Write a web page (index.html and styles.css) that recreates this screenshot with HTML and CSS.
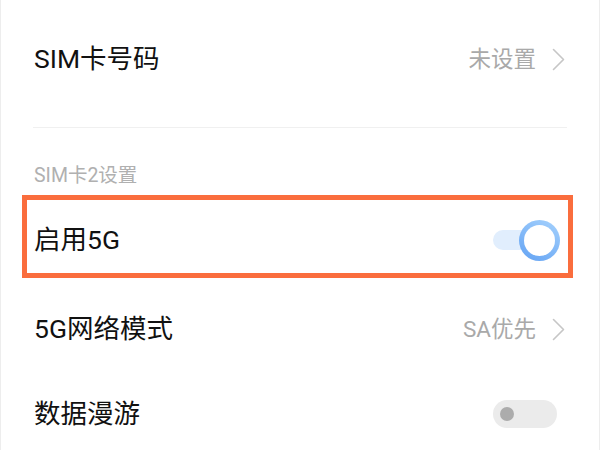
FILE: index.html
```html
<!DOCTYPE html>
<html lang="zh-CN">
<head>
<meta charset="utf-8">
<title>SIM卡设置</title>
<link rel="stylesheet" href="styles.css">
</head>
<body>
<div class="page">
  <div class="row row-first">
    <span class="label">SIM卡号码</span>
    <span class="value-group">
      <span class="value">未设置</span>
      <svg class="chevron" width="13" height="23" viewBox="0 0 13 23"><path d="M1.5 1.5 L11.5 11.5 L1.5 21.5" fill="none" stroke="#c6c6c6" stroke-width="1.6" stroke-linecap="round" stroke-linejoin="round"/></svg>
    </span>
  </div>
  <div class="divider"></div>
  <div class="section-title">SIM卡2设置</div>
  <div class="row row-highlight">
    <span class="label">启用5G</span>
    <span class="switch-on">
      <span class="switch-on-track"></span>
      <span class="switch-on-knob"></span>
    </span>
  </div>
  <div class="row row-mode">
    <span class="label">5G网络模式</span>
    <span class="value-group">
      <span class="value">SA优先</span>
      <svg class="chevron" width="13" height="23" viewBox="0 0 13 23"><path d="M1.5 1.5 L11.5 11.5 L1.5 21.5" fill="none" stroke="#c6c6c6" stroke-width="1.6" stroke-linecap="round" stroke-linejoin="round"/></svg>
    </span>
  </div>
  <div class="row row-last">
    <span class="label">数据漫游</span>
    <span class="switch-off"><span class="switch-off-knob"></span></span>
  </div>
</div>
</body>
</html>
```
FILE: styles.css
```css
html, body {
  margin: 0;
  padding: 0;
  background: #ffffff;
  overflow: hidden;
}

.page {
  width: 600px;
  height: 450px;
  box-sizing: border-box;
  border-left: 1px solid #ededed;
  border-right: 1px solid #ededed;
  font-family: "Roboto", "Noto Sans CJK SC", sans-serif;
  color: #111111;
}

.row {
  display: flex;
  align-items: center;
  justify-content: space-between;
  padding: 0 34px 0 33px;
  box-sizing: border-box;
}

.row-first { height: 118px; }
.row-highlight { height: 88px; position: relative; }
.row-mode { height: 90px; }
.row-last { height: 80px; }

.row-highlight::after {
  content: "";
  position: absolute;
  top: -1px;
  left: 21px;
  width: 551px;
  height: 83px;
  border: 5px solid #fa6d3d;
  box-sizing: border-box;
  pointer-events: none;
}

.label {
  font-size: 26.5px;
  line-height: 32px;
}

.value-group {
  display: flex;
  align-items: center;
  gap: 16px;
}

.value {
  font-size: 22.5px;
  line-height: 30px;
  color: #a9a9a9;
}

.chevron {
  display: block;
}

.divider {
  height: 1px;
  margin: 9px 32px 0;
  background: #f0f0f0;
}

.section-title {
  height: 68px;
  box-sizing: border-box;
  padding: 36px 33px 0;
  font-size: 19.5px;
  line-height: 24px;
  color: #b0b0b0;
}

.switch-on {
  position: relative;
  width: 67px;
  height: 41px;
  margin-right: 5px;
}

.switch-on-track {
  position: absolute;
  left: 0;
  top: 10px;
  width: 60px;
  height: 20px;
  border-radius: 10px;
  background: #e1eefd;
}

.switch-on-knob {
  position: absolute;
  right: 0;
  top: 0;
  width: 41px;
  height: 41px;
  border-radius: 50%;
  box-sizing: border-box;
  border: 5.5px solid transparent;
  background:
    linear-gradient(#ffffff, #ffffff) padding-box,
    linear-gradient(30deg, #62a2f3, #a6d2fd) border-box;
}

.switch-off {
  display: flex;
  align-items: center;
  width: 64px;
  height: 28px;
  padding-left: 7px;
  box-sizing: border-box;
  border-radius: 14px;
  background: #ebebeb;
  margin-right: 8px;
}

.switch-off-knob {
  width: 14px;
  height: 14px;
  border-radius: 50%;
  background: #acacac;
}
```
